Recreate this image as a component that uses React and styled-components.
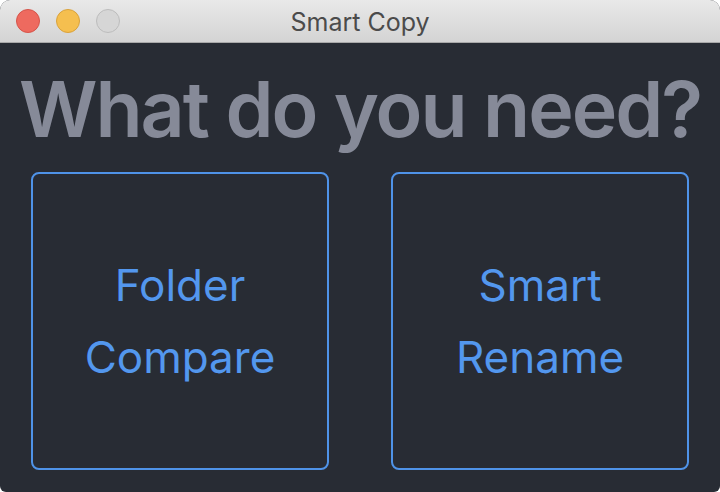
import React from "react";
import styled, { createGlobalStyle } from "styled-components";

const Global = createGlobalStyle`
  html, body { margin: 0; padding: 0; background: #ffffff; }
  body { font-family: Inter, "Noto Sans", sans-serif; }
`;

const Window = styled.div`
  width: 720px;
  height: 492px;
  display: flex;
  flex-direction: column;
  background: #282c34;
  border-radius: 10px 10px 6px 6px;
  overflow: hidden;
`;

const TitleBar = styled.div`
  height: 43px;
  flex: none;
  display: flex;
  align-items: center;
  justify-content: center;
  position: relative;
  background: linear-gradient(#e9e9e9, #d4d4d4);
  border-bottom: 1px solid #a9a9a9;
  box-sizing: border-box;
`;

const Lights = styled.div`
  position: absolute;
  left: 16px;
  top: 9px;
  display: flex;
  gap: 16px;
`;

const Light = styled.span`
  width: 24px;
  height: 24px;
  border-radius: 50%;
  box-sizing: border-box;
  background: ${(p) => p.$fill};
  border: 1px solid ${(p) => p.$edge};
`;

const Title = styled.div`
  font-size: 25px;
  color: #4b4b4b;
  padding-top: 2px;
`;

const Content = styled.div`
  flex: 1;
  display: flex;
  flex-direction: column;
  align-items: center;
  padding: 0 31px;
`;

const Heading = styled.h1`
  margin: 20px 0 0;
  font-size: 77px;
  font-weight: 600;
  line-height: 92px;
  color: #868a98;
  letter-spacing: -2px;
  white-space: nowrap;
`;

const Choices = styled.div`
  margin-top: 17px;
  width: 100%;
  display: grid;
  grid-template-columns: 1fr 1fr;
  gap: 62px;
`;

const Choice = styled.button`
  height: 298px;
  box-sizing: border-box;
  background: transparent;
  border: 2px solid #4f93e8;
  border-radius: 8px;
  font-family: inherit;
  font-size: 44px;
  line-height: 72px;
  color: #5397ee;
  display: flex;
  flex-direction: column;
  align-items: center;
  justify-content: center;
  padding: 0;
  cursor: pointer;
`;

export default function App() {
  return (
    <>
      <Global />
      <Window>
        <TitleBar>
          <Lights>
            <Light $fill="#ee6a5f" $edge="#d5544a" />
            <Light $fill="#f5bf4f" $edge="#d9a23c" />
            <Light $fill="#d6d6d6" $edge="#bcbcbc" />
          </Lights>
          <Title>Smart Copy</Title>
        </TitleBar>
        <Content>
          <Heading>What do you need?</Heading>
          <Choices>
            <Choice>
              <span>Folder</span>
              <span>Compare</span>
            </Choice>
            <Choice>
              <span>Smart</span>
              <span>Rename</span>
            </Choice>
          </Choices>
        </Content>
      </Window>
    </>
  );
}
